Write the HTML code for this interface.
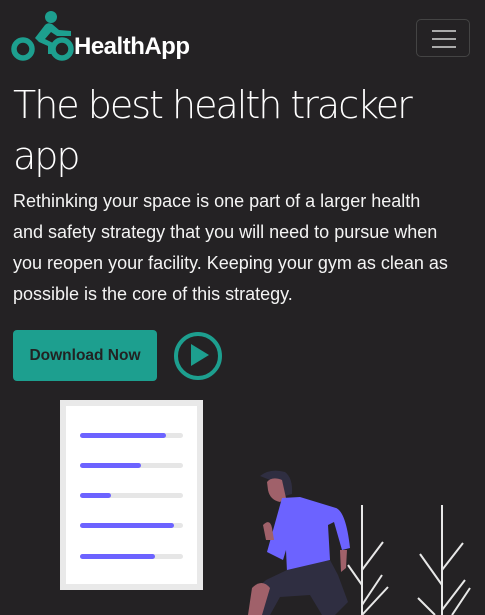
<!DOCTYPE html>
<html><head><meta charset="utf-8"><style>
body{margin:0;width:485px;height:615px;overflow:hidden;background:#242224;font-family:"Liberation Sans",sans-serif;color:#fff;position:relative}
.brand{position:absolute;left:11px;top:10px}
.bt{position:absolute;left:74px;top:33px;font-size:24px;font-weight:bold;letter-spacing:-0.5px}
.tog{position:absolute;left:416px;top:19px;width:54px;height:38px;border:1px solid #444;border-radius:5px;box-sizing:border-box}
.tog i{position:absolute;left:15px;width:24px;height:2px;background:#aaa}
h1{position:absolute;left:13px;top:80px;margin:0;font-family:"DejaVu Sans",sans-serif;font-weight:200;font-size:38px;line-height:51px;width:460px;letter-spacing:-2px}
p{position:absolute;left:13px;top:186px;margin:0;font-size:18px;line-height:31px;width:436px;color:#f4f4f4}
.btn{position:absolute;left:13px;top:330px;width:144px;height:51px;background:#1d9f8f;border-radius:4px;color:#222;font-weight:bold;font-size:15.5px;line-height:51px;text-align:center}
.card{position:absolute;left:60px;top:400px;width:143px;height:190px;background:#e9e9e9}
.card div{position:absolute;left:6px;top:6px;right:6px;bottom:6px;background:#fff}
.bar{position:absolute;left:80px;width:103px;height:5px;border-radius:3px;background:#e6e6e6}
.bar b{display:block;height:5px;border-radius:3px;background:#6c63ff}
</style></head><body>
<svg class="brand" width="64" height="52" viewBox="0 0 64 52">
<circle cx="40" cy="7" r="6" fill="#1d9f8f"/>
<path d="M24 28 L34 15 Q37 12 41 14 L48 20 L60 21 L60 26 L46 26 L40 22 L34 29 L42 33 L42 44 L37 44 L37 36 L28 32 Z" fill="#1d9f8f"/>
<circle cx="12" cy="39" r="9" fill="none" stroke="#1d9f8f" stroke-width="5.5"/>
<circle cx="51" cy="39" r="9" fill="none" stroke="#1d9f8f" stroke-width="5.5"/>
</svg>
<div class="bt">HealthApp</div>
<div class="tog"><i style="top:10px"></i><i style="top:18px"></i><i style="top:26px"></i></div>
<h1>The best health tracker app</h1>
<p>Rethinking your space is one part of a larger health and safety strategy that you will need to pursue when you reopen your facility. Keeping your gym as clean as possible is the core of this strategy.</p>
<div class="btn">Download Now</div>
<svg style="position:absolute;left:172px;top:330px" width="52" height="52" viewBox="0 0 52 52"><circle cx="26" cy="26" r="22" fill="none" stroke="#1d9f8f" stroke-width="4"/><path d="M19 14 L37 25 L19 36 Z" fill="#1d9f8f"/></svg>
<div class="card"><div></div></div>
<div class="bar" style="top:433px"><b style="width:86px"></b></div>
<div class="bar" style="top:463px"><b style="width:61px"></b></div>
<div class="bar" style="top:493px"><b style="width:31px"></b></div>
<div class="bar" style="top:523px"><b style="width:94px"></b></div>
<div class="bar" style="top:554px"><b style="width:75px"></b></div>
<svg style="position:absolute;left:230px;top:440px" width="255" height="175" viewBox="0 0 255 175">
<g stroke="#e8e8e8" stroke-width="2" fill="none">
<path d="M132 65 L132 175 M132 130 L153 102 M132 145 L118 125 M132 165 L152 135 M132 175 L158 147"/>
<path d="M212 65 L212 175 M212 130 L233 103 M212 145 L190 114 M212 170 L235 140 M205 175 L188 158 M222 175 L240 148"/>
</g>
<path d="M30 36 Q40 28 55 32 Q63 38 62 54 L55 56 Q45 52 40 40 Z" fill="#2f2e41"/>
<path d="M37 42 Q42 36 52 40 L56 58 L50 62 Q40 60 38 50 Z" fill="#a0616a"/>
<path d="M52 58 L70 57 L106 68 Q116 72 120 108 L112 110 L104 82 L98 85 L100 120 L57 132 L56 110 L53 120 L37 112 Z" fill="#6c63ff"/>
<path d="M33 85 Q40 78 42 88 L44 100 L36 100 Z" fill="#a0616a"/>
<path d="M110 110 L117 110 L116 128 L111 132 Z" fill="#a0616a"/>
<path d="M57 130 L100 120 L108 135 L118 162 L105 175 L92 175 L80 155 L50 157 L40 175 L22 175 L25 150 L36 140 Z" fill="#2f2e41"/>
<path d="M22 148 Q32 138 40 148 L32 175 L18 175 Z" fill="#a0616a"/>
</svg>
</body></html>
